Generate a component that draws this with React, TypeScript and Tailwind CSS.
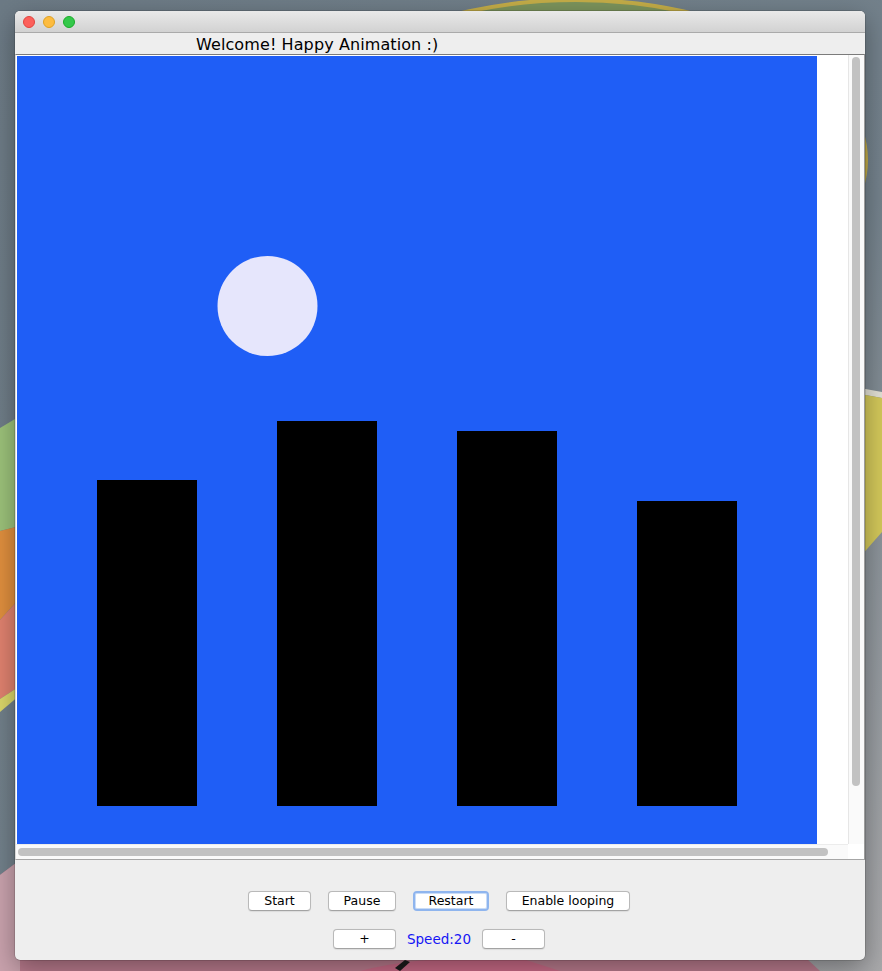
import React from "react";

const FONT = { fontFamily: '"DejaVu Sans", "Liberation Sans", sans-serif' };

interface BtnProps {
  label: string;
  width: string;
  focused?: boolean;
}

const AquaButton = ({ label, width, focused = false }: BtnProps) => (
  <button
    className={
      focused
        ? `${width} h-[20px] rounded-[4px] border-2 border-[#8fb5ee] bg-white text-[12.5px] leading-none text-black shadow-[inset_0_0_0_1px_#c9dcf7]`
        : `${width} h-[20px] rounded-[4px] border border-[#b9b9b9] border-b-[#a3a3a3] bg-white text-[12.5px] leading-none text-black shadow-[0_0.5px_1px_rgba(0,0,0,0.08)]`
    }
  >
    {label}
  </button>
);

// desktop wallpaper behind the window
const Wallpaper = () => (
  <svg className="absolute inset-0" width="882" height="971" viewBox="0 0 882 971">
    <defs>
      <linearGradient id="bg" x1="0" y1="0" x2="1" y2="1">
        <stop offset="0" stopColor="#6c7a85" />
        <stop offset="0.6" stopColor="#74828c" />
        <stop offset="1" stopColor="#a9a9ab" />
      </linearGradient>
    </defs>
    <rect width="882" height="971" fill="url(#bg)" />
    <ellipse cx="576" cy="160" rx="290" ry="160" fill="#7c945c" stroke="#c4ad48" strokeWidth="4" />
    {/* left edge stripes */}
    <polygon points="0,428 20,416 20,526 0,531" fill="#9cc27a" />
    <polygon points="0,531 20,526 20,598 0,620" fill="#e08f3e" />
    <polygon points="0,620 20,598 20,686 0,699" fill="#e0826f" />
    <polygon points="0,699 20,686 20,695 0,712" fill="#dcd76a" />
    {/* bottom pink shapes */}
    <polygon points="0,875 20,860 700,860 820,971 0,971" fill="#b87a8c" />
    <polygon points="0,875 20,860 20,971 0,971" fill="#c9a2ad" />
    <path d="M360 971 Q420 955 520 958 L560 971 Z" fill="#c86a86" />
    <path d="M395 968 L405 960 L410 962 L400 971 Z" fill="#1a1a1a" />
    {/* right edge yellow */}
    <polygon points="860,388 882,392 882,398 860,394" fill="#e2e0d4" />
    <polygon points="860,394 882,398 882,532 860,557" fill="#d3c85a" />
  </svg>
);

const Scene = () => (
  <svg width="800" height="788" viewBox="0 0 800 788" className="block shrink-0">
    <rect width="800" height="788" fill="#1f5ef6" />
    <circle cx="250.5" cy="250" r="50" fill="#e6e6fc" />
    <rect x="80" y="424" width="100" height="326" fill="#000" />
    <rect x="260" y="365" width="100" height="385" fill="#000" />
    <rect x="440" y="375" width="100" height="375" fill="#000" />
    <rect x="620" y="445" width="100" height="305" fill="#000" />
  </svg>
);

export default function App() {
  return (
    <div className="relative w-[882px] h-[971px] overflow-hidden" style={FONT}>
      <Wallpaper />
      <div className="relative pl-[15px] pt-[11px]">
        <div className="w-[850px] h-[949px] flex flex-col rounded-[5px] overflow-hidden bg-[#eeeeee] shadow-[0_8px_26px_rgba(0,0,0,0.35),0_0_0_0.5px_rgba(0,0,0,0.25)]">
          {/* title bar */}
          <div className="h-[22px] shrink-0 flex items-center gap-[8px] pl-[8px] border-b border-[#aaaaaa] bg-gradient-to-b from-[#e9e9e9] to-[#d2d2d2]">
            <span className="w-[12px] h-[12px] rounded-full bg-[#fc605b] border border-[#e0443e]" />
            <span className="w-[12px] h-[12px] rounded-full bg-[#fdbc40] border border-[#dea123]" />
            <span className="w-[12px] h-[12px] rounded-full bg-[#34c84a] border border-[#1aab29]" />
          </div>

          {/* label */}
          <div className="h-[21px] shrink-0 pl-[181px] pt-px text-[16px] leading-[21px] tracking-[0.1px] text-black">
            Welcome! Happy Animation :)
          </div>

          {/* scroll pane */}
          <div className="shrink-0 flex flex-col border-t border-[#7b7b7b] border-b border-b-[#a6a6a6] border-r border-r-[#9c9c9c] border-l border-l-[#d9d9d9]">
            <div className="flex h-[789px]">
              <div className="flex-1 bg-white pl-px pt-px">
                <Scene />
              </div>
              <div className="w-[16px] border-l border-[#e6e6e6] bg-[#fafafa] pl-[3px] pt-[2px]">
                <div className="w-[8px] h-[729px] rounded-full bg-[#c2c2c2]" />
              </div>
            </div>
            <div className="flex h-[15px]">
              <div className="flex-1 border-t border-[#ececec] bg-[#fafafa] pl-[2px] pt-[3px]">
                <div className="w-[810px] h-[8px] rounded-full bg-[#c2c2c2]" />
              </div>
              <div className="w-[16px] bg-white" />
            </div>
          </div>

          {/* controls */}
          <div className="flex-1 flex flex-col items-center pt-[31px] pr-[2px] gap-[18px]">
            <div className="flex items-center gap-[17px]">
              <AquaButton label="Start" width="w-[63px]" />
              <AquaButton label="Pause" width="w-[68px]" />
              <AquaButton label="Restart" width="w-[76px]" focused />
              <AquaButton label="Enable looping" width="w-[124px]" />
            </div>
            <div className="flex items-center gap-[11px]">
              <AquaButton label="+" width="w-[63px]" />
              <span className="text-[13.5px] text-[#1515f5]">Speed:20</span>
              <AquaButton label="-" width="w-[63px]" />
            </div>
          </div>
        </div>
      </div>
    </div>
  );
}
